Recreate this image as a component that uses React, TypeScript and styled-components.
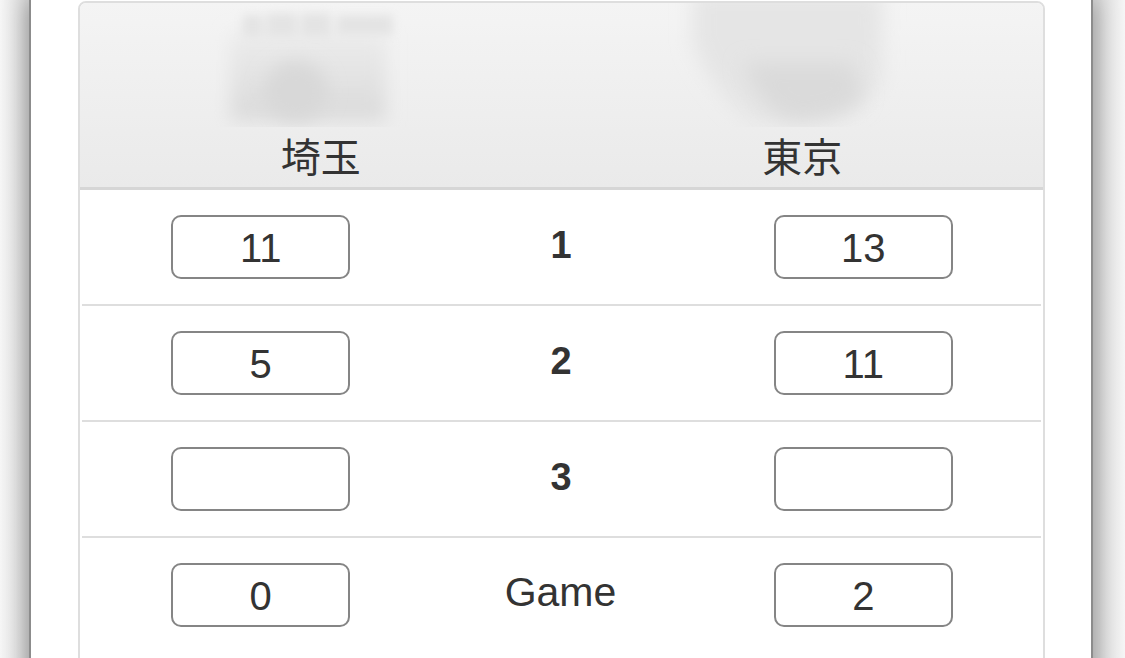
import React from "react";
import styled, { createGlobalStyle } from "styled-components";

const Global = createGlobalStyle`
  html, body { margin: 0; padding: 0; height: 100%; overflow: hidden; }
  body {
    background: linear-gradient(90deg, #f6f6f6 0px, #d9d9d9 26px, #d9d9d9 1099px, #f6f6f6 1125px);
    font-family: "Liberation Sans", Arial, sans-serif;
  }
`;

const Sheet = styled.div`
  margin: 0 32px 0 29px;
  min-height: 100vh;
  background: #ffffff;
  border-left: 2px solid #8c8c8c;
  border-right: 2px solid #8c8c8c;
  box-shadow: 0 0 22px rgba(0, 0, 0, 0.35);
  padding: 1px 46px 0 47px;
  box-sizing: border-box;
`;

const Card = styled.div`
  border: 2px solid #dedede;
  border-radius: 8px 8px 0 0;
  background: #ffffff;
  min-height: 700px;
`;

const Header = styled.div`
  display: grid;
  grid-template-columns: 1fr 1fr;
  background: linear-gradient(180deg, #f4f4f4 0%, #eaeaea 100%);
  border-bottom: 3px solid #d6d6d6;
  border-radius: 6px 6px 0 0;
  padding-bottom: 4px;
  overflow: hidden;
`;

const Team = styled.div`
  display: flex;
  flex-direction: column;
  align-items: center;
`;

const Emblem = styled.svg`
  display: block;
  width: 100%;
  height: 124px;
`;

const TeamName = styled.div`
  font-family: "Noto Sans CJK JP", sans-serif;
  font-size: 40px;
  line-height: 56px;
  color: #333333;
`;

const Row = styled.div`
  display: grid;
  grid-template-columns: 1fr 1fr 1fr;
  align-items: center;
  justify-items: center;
  height: 114px;
  margin: 0 2px;
  padding: 0 27px 0 28px;
  border-bottom: 2px solid #dedede;

  &:last-child {
    border-bottom: none;
  }
`;

const Score = styled.input`
  box-sizing: border-box;
  width: 179px;
  height: 64px;
  border: 2px solid #858585;
  border-radius: 10px;
  background: #ffffff;
  text-align: center;
  font-family: "Liberation Sans", Arial, sans-serif;
  font-size: 40px;
  color: #333333;
  padding: 3px 0 0;
  outline: none;
`;

const SetLabel = styled.div<{ $bold?: boolean }>`
  font-family: "Liberation Sans", Arial, sans-serif;
  font-size: ${(p) => (p.$bold ? "38px" : "41px")};
  font-weight: ${(p) => (p.$bold ? 700 : 400)};
  color: #333333;
  line-height: 1;
  margin-top: ${(p) => (p.$bold ? "-4px" : "-6px")};
  margin-left: ${(p) => (p.$bold ? "-2px" : "-3px")};
`;

const LeftEmblem = () => (
  <Emblem viewBox="0 0 480 124" preserveAspectRatio="none">
    <defs>
      <filter id="bl1" x="-50%" y="-50%" width="200%" height="200%">
        <feGaussianBlur stdDeviation="9" />
      </filter>
      <filter id="bl1b" x="-50%" y="-50%" width="200%" height="200%">
        <feGaussianBlur stdDeviation="5" />
      </filter>
      <linearGradient id="lg1" x1="0" y1="0" x2="0" y2="1">
        <stop offset="0" stopColor="#ececec" />
        <stop offset="1" stopColor="#dadada" />
      </linearGradient>
    </defs>
    <rect x="150" y="30" width="155" height="88" fill="url(#lg1)" filter="url(#bl1)" />
    <ellipse cx="215" cy="88" rx="32" ry="30" fill="#d8d8d8" filter="url(#bl1)" />
    <g fill="#e4e4e4" filter="url(#bl1b)">
      <rect x="162" y="12" width="20" height="22" />
      <rect x="186" y="10" width="30" height="24" />
      <rect x="220" y="10" width="30" height="24" />
      <rect x="256" y="12" width="56" height="20" />
    </g>
  </Emblem>
);

const RightEmblem = () => (
  <Emblem viewBox="0 0 480 124" preserveAspectRatio="none">
    <defs>
      <filter id="bl2" x="-50%" y="-50%" width="200%" height="200%">
        <feGaussianBlur stdDeviation="10" />
      </filter>
    </defs>
    <path
      d="M130 -10 L320 -10 L318 80 Q300 112 240 116 Q205 122 190 118 Q150 90 130 40 Z"
      fill="#e5e5e5"
      filter="url(#bl2)"
    />
    <path
      d="M180 60 Q200 110 230 118 Q280 118 300 95 L290 60 Z"
      fill="#dadada"
      filter="url(#bl2)"
    />
  </Emblem>
);

const rows: { left: string; label: string; right: string; bold: boolean }[] = [
  { left: "11", label: "1", right: "13", bold: true },
  { left: "5", label: "2", right: "11", bold: true },
  { left: "", label: "3", right: "", bold: true },
  { left: "0", label: "Game", right: "2", bold: false },
];

export default function App() {
  return (
    <>
      <Global />
      <Sheet>
        <Card>
          <Header>
            <Team>
              <LeftEmblem />
              <TeamName>埼玉</TeamName>
            </Team>
            <Team>
              <RightEmblem />
              <TeamName>東京</TeamName>
            </Team>
          </Header>
          {rows.map((r, i) => (
            <Row key={i}>
              <Score readOnly value={r.left} />
              <SetLabel $bold={r.bold}>{r.label}</SetLabel>
              <Score readOnly value={r.right} />
            </Row>
          ))}
        </Card>
      </Sheet>
    </>
  );
}
